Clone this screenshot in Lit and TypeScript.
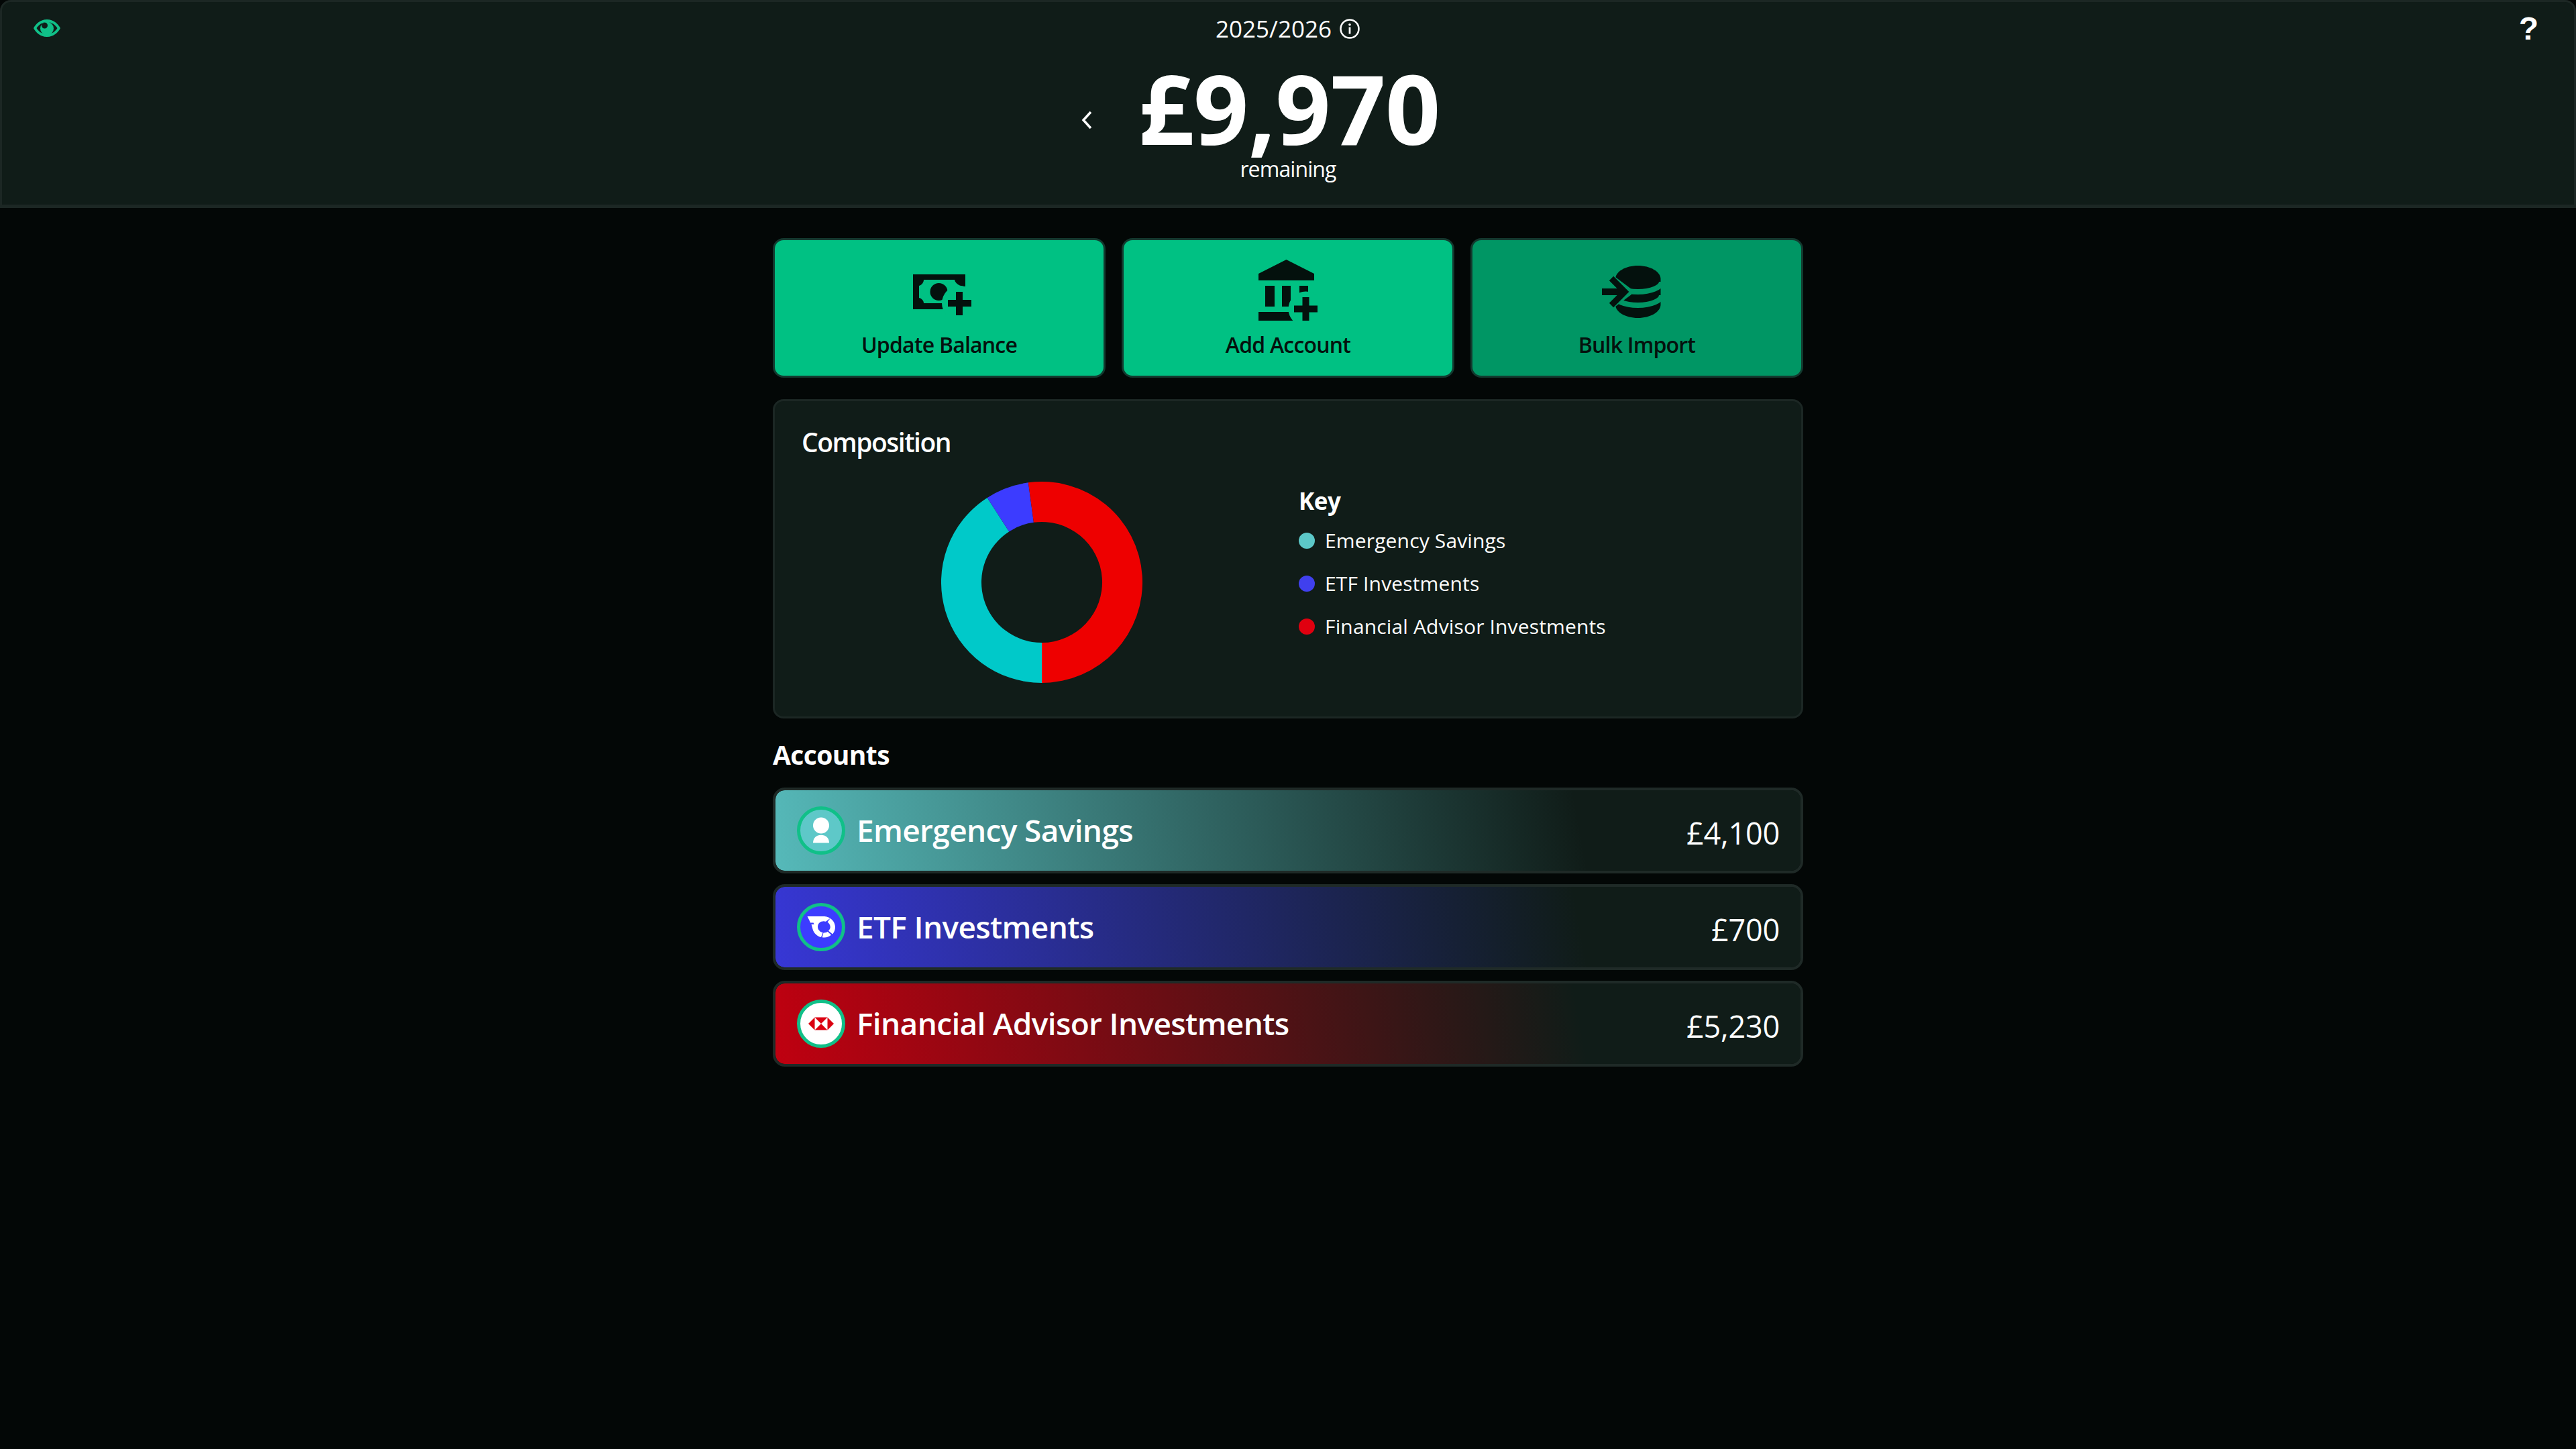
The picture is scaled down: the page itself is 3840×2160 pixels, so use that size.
import { LitElement, html, css, svg } from "lit";
import { customElement } from "lit/decorators.js";

const slices = [
  { v: 4100, c: "#00c9c9" },
  { v: 700, c: "#3c3cff" },
  { v: 5230, c: "#ee0000" },
];

function arc(a0: number, a1: number, R: number, r: number) {
  const p = (a: number, q: number) => {
    const t = ((a - 90) * Math.PI) / 180;
    return `${(150 + q * Math.cos(t)).toFixed(2)} ${(150 + q * Math.sin(t)).toFixed(2)}`;
  };
  const large = a1 - a0 > 180 ? 1 : 0;
  return `M${p(a0, R)}A${R} ${R} 0 ${large} 1 ${p(a1, R)}L${p(a1, r)}A${r} ${r} 0 ${large} 0 ${p(a0, r)}Z`;
}

function donut() {
  const total = slices.reduce((s, x) => s + x.v, 0);
  let a = 180;
  return slices.map((s) => {
    const b = a + (s.v / total) * 360;
    const d = arc(a, b, 150, 90);
    a = b;
    return svg`<path d=${d} fill=${s.c}></path>`;
  });
}

const accounts = [
  {
    cls: "teal",
    name: "Emergency Savings",
    amount: "£4,100",
    logo: svg`<circle cx="36" cy="28.5" r="12" fill="#fff"/><path d="M24 54.5C24 47 29 42.7 36 42.7S48 47 48 54.5Z" fill="#fff"/>`,
  },
  {
    cls: "blue",
    name: "ETF Investments",
    amount: "£700",
    logo: svg`<path fill="#fff" d="M15.5 20H41C49.5 20.500 57 27.500 57 36C57 40 55.500 43.600 53 46.500L47 41.500C48.700 39.800 49.700 38 49.700 36C49.700 33 48 30 45.600 28.500L50 22.500 43 27.700C41 27 38.600 27 36.500 27.700C35 28.200 33.800 29.200 32.800 30.300C31.600 31.800 31 33.800 31 36C31.200 40 34.600 43.600 38.600 44.200L36 51C30 49.500 25.200 45 23.600 39.400L21.500 32H25.500L24.600 29.600H20L18.500 26Z"/><path fill="#fff" d="M39.500 44.500C42 44.700 44.200 44 45.800 42.800L51 47.800C48.400 50.200 44.500 51.600 41 51.600C39.600 51.600 38.400 51.400 37.600 51.200Z"/>`,
  },
  {
    cls: "red",
    name: "Financial Advisor Investments",
    amount: "£5,230",
    logo: svg`<path fill="#db0011" d="M17 36L26.500 26.500V45.500ZM55 36L45.500 26.500V45.500ZM26.500 26.500H45.500L36 36ZM26.500 45.500H45.500L36 36Z"/>`,
  },
];

const legend = [
  { name: "Emergency Savings", cls: "d-teal" },
  { name: "ETF Investments", cls: "d-blue" },
  { name: "Financial Advisor Investments", cls: "d-red" },
];

@customElement("app-root")
export class AppRoot extends LitElement {
  static styles = css`
    :host {
      display: block;
      min-height: 2160px;
      background: #030706;
      color: #fff;
      font-family: "Open Sans", "Noto Sans", sans-serif;
    }
    .top {
      box-sizing: border-box;
      height: 310px;
      background: #101c18;
      border: 3px solid #1c2724;
      border-bottom-width: 5px;
      border-radius: 16px 16px 0 0;
      display: grid;
      grid-template-columns: 1fr auto 1fr;
      padding: 0 47px;
    }
    .eye {
      width: 40px;
      height: 26px;
      margin-top: 26px;
      display: block;
    }
    .help {
      justify-self: end;
      font-family: "Liberation Sans", sans-serif;
      font-size: 48px;
      font-weight: 700;
      line-height: 56px;
      margin: 12px 6px 0 0;
    }
    .mid {
      display: flex;
      flex-direction: column;
      align-items: center;
    }
    .year {
      display: flex;
      align-items: center;
      gap: 11px;
      font-size: 35px;
      line-height: 40px;
      margin-top: 20px;
    }
    .year svg {
      width: 32px;
      height: 32px;
      display: block;
    }
    .amount-row {
      position: relative;
      margin-top: 32px;
    }
    .amount {
      font-size: 144px;
      font-weight: 700;
      line-height: 130px;
      letter-spacing: -0.5px;
      margin-left: 4px;
    }
    .back {
      position: absolute;
      left: -83px;
      top: 70px;
      width: 20px;
      height: 28px;
    }
    .remaining {
      font-size: 32px;
      line-height: 36px;
      margin-top: 9px;
      letter-spacing: -0.9px;
    }
    main {
      width: 1536px;
      margin: 0 auto;
      padding-top: 45px;
    }
    .actions {
      display: grid;
      grid-template-columns: repeat(3, 1fr);
      gap: 24px;
    }
    .action {
      box-sizing: border-box;
      height: 208px;
      background: #00c183;
      border: 3px solid #133a2f;
      border-radius: 16px;
      color: #04110d;
      display: flex;
      flex-direction: column;
      align-items: center;
      font-size: 32px;
      font-weight: 600;
    }
    .action.dim {
      background: #009664;
    }
    .action .ic {
      height: 120px;
    }
    .action svg {
      display: block;
    }
    .i1 { margin: 51px 0 0 9px; }
    .i2 { margin-top: 29px; }
    .i3 { margin: 38px 16px 0 0; }
    .action .label {
      line-height: 44px;
      margin-top: 14px;
      letter-spacing: -0.8px;
    }
    .card {
      box-sizing: border-box;
      margin-top: 32px;
      height: 476px;
      background: #101c18;
      border: 3px solid #1c2724;
      border-radius: 16px;
      padding: 36px 40px 0;
    }
    .card h2 {
      margin: 0;
      font-size: 39px;
      font-weight: 600;
      line-height: 50px;
      letter-spacing: -1.5px;
    }
    .chart {
      display: grid;
      grid-template-columns: 716px 1fr;
      column-gap: 25px;
      margin-top: 34px;
    }
    .chart svg {
      width: 300px;
      height: 300px;
      display: block;
      justify-self: center;
    }
    .key h3 {
      margin: 0;
      font-size: 35px;
      font-weight: 700;
      line-height: 44px;
      margin-top: 7px;
      letter-spacing: -0.5px;
    }
    .key ul {
      list-style: none;
      margin: 17px 0 0;
      padding: 0;
      display: grid;
      row-gap: 24px;
    }
    .key li {
      display: flex;
      align-items: center;
      gap: 15px;
      font-size: 30px;
      line-height: 40px;
      letter-spacing: 0.15px;
    }
    .dot {
      width: 24px;
      height: 24px;
      border-radius: 50%;
      display: block;
    }
    .d-teal { background: #5cc8c8; }
    .d-blue { background: #4040ee; }
    .d-red { background: #e0000f; }
    .accounts-title {
      margin: 30px 0 0;
      font-size: 39px;
      font-weight: 700;
      line-height: 48px;
      letter-spacing: -0.6px;
    }
    .rows {
      margin-top: 25px;
      display: grid;
      row-gap: 16px;
    }
    .row {
      box-sizing: border-box;
      height: 128px;
      border: 4px solid #1f2a27;
      border-radius: 18px;
      background-color: #101c18;
      background-image: linear-gradient(80deg, var(--c), transparent 78%);
      background-origin: border-box;
      background-clip: padding-box;
      display: flex;
      align-items: center;
      padding: 0 31px 0 32px;
    }
    .teal { --c: #56baba; --i: #5ec8c8; }
    .blue { --c: #3737d6; --i: #3c3cff; }
    .red { --c: #c00010; --i: #ffffff; }
    .logo {
      width: 72px;
      height: 72px;
      border-radius: 50%;
      background: var(--i);
      border: 5px solid #10c088;
      box-sizing: border-box;
      flex: none;
      position: relative;
      overflow: hidden;
    }
    .logo svg {
      position: absolute;
      left: -5px;
      top: -5px;
      width: 72px;
      height: 72px;
      display: block;
    }
    .name {
      margin-left: 17px;
      font-size: 46px;
      font-weight: 550;
      letter-spacing: -0.65px;
      line-height: 60px;
      flex: 1;
      margin-top: -2px;
    }
    .val {
      font-size: 45px;
      line-height: 60px;
      margin-top: 8px;
      letter-spacing: -0.2px;
    }
  `;

  render() {
    return html`
      <header class="top">
        <svg class="eye" viewBox="0 0 40 26">
          <path fill="#10c088" fill-rule="evenodd" d="M20 0C30 0 37 7 40 13C37 19 30 26 20 26C10 26 3 19 0 13C3 7 10 0 20 0ZM20 4C12 4 7.500 8.500 4.500 13C7.500 17.500 12 22 20 22C28 22 32.500 17.500 35.500 13C32.500 8.500 28 4 20 4Z"/>
          <path fill="#10c088" fill-rule="evenodd" d="M20 3.500A10 10 0 1 1 10 13.500A10 10 0 0 1 20 3.500ZM16.500 4.500A4.500 4.500 0 1 0 16.500 13.500A4.500 4.500 0 0 0 16.500 4.500Z"/>
        </svg>
        <div class="mid">
          <div class="year">
            <span>2025/2026</span>
            <svg viewBox="0 0 32 32">
              <circle cx="16" cy="16" r="13.500" fill="none" stroke="#fff" stroke-width="2.500"/>
              <rect x="14.600" y="13.500" width="2.800" height="10" fill="#fff"/>
              <circle cx="16" cy="9.800" r="1.800" fill="#fff"/>
            </svg>
          </div>
          <div class="amount-row">
            <svg class="back" viewBox="0 0 20 28"><path d="M16 2L5 14L16 26" fill="none" stroke="#fff" stroke-width="3.500"/></svg>
            <div class="amount">£9,970</div>
          </div>
          <div class="remaining">remaining</div>
        </div>
        <div class="help">?</div>
      </header>
      <main>
        <section class="actions">
          <div class="action">
            <div class="ic">
              <svg class="i1" width="88" height="62" viewBox="0 0 88 62">
                <path fill="#04110d" d="M0 0H78V18C70 18 63 14 62 8H16C16 12 13 16 9 17V35C13 36 16 39 16 43H48V52H0Z"/>
                <circle cx="38.500" cy="26" r="13" fill="#04110d"/>
                <circle cx="69" cy="43" r="26" fill="#00c183"/>
                <path fill="#04110d" d="M64 26H74V38H87V48H74V61H64V48H52V38H64Z"/>
              </svg>
            </div>
            <div class="label">Update Balance</div>
          </div>
          <div class="action">
            <div class="ic">
              <svg class="i2" width="88" height="91" viewBox="0 0 88 91">
                <path fill="#04110d" d="M0 21L41.500 0L83 21V31H0ZM10 39H24V70H10ZM35 39H48V70H35ZM61 39H74V70H61ZM0 78H52V91H0Z"/>
                <circle cx="70.500" cy="73.500" r="26" fill="#00c183"/>
                <path fill="#04110d" d="M65.500 56H75.500V68.500H88V78.500H75.500V91H65.500V78.500H53V68.500H65.500Z"/>
              </svg>
            </div>
            <div class="label">Add Account</div>
          </div>
          <div class="action dim">
            <div class="ic">
              <svg class="i3" width="88" height="78" viewBox="0 0 88 78">
                <path fill="#04110d" d="M20 20C20 9 35 0 53.500 0C72 0 87.500 9 87.500 20V58C87.500 69 72 78 53.500 78C35 78 20 69 20 58Z"/>
                <path fill="none" stroke="#009664" stroke-width="8" d="M18 24A35.500 15 0 0 0 89 24M18 44A35.500 15 0 0 0 89 44"/>
                <path fill="#009664" d="M0 0H20V17L44 35V43L20 61V78H0Z"/>
                <path fill="none" stroke="#04110d" stroke-width="9" d="M14 19L34 39L14 59"/>
                <path fill="#04110d" d="M0 34H34V44H0Z"/>
              </svg>
            </div>
            <div class="label">Bulk Import</div>
          </div>
        </section>
        <section class="card">
          <h2>Composition</h2>
          <div class="chart">
            <svg viewBox="0 0 300 300">${donut()}</svg>
            <div class="key">
              <h3>Key</h3>
              <ul>
                ${legend.map(
                  (l) => html`<li><span class="dot ${l.cls}"></span><span>${l.name}</span></li>`
                )}
              </ul>
            </div>
          </div>
        </section>
        <h2 class="accounts-title">Accounts</h2>
        <section class="rows">
          ${accounts.map(
            (a) => html`
              <div class="row ${a.cls}">
                <div class="logo"><svg viewBox="0 0 72 72">${a.logo}</svg></div>
                <div class="name">${a.name}</div>
                <div class="val">${a.amount}</div>
              </div>
            `
          )}
        </section>
      </main>
    `;
  }
}
